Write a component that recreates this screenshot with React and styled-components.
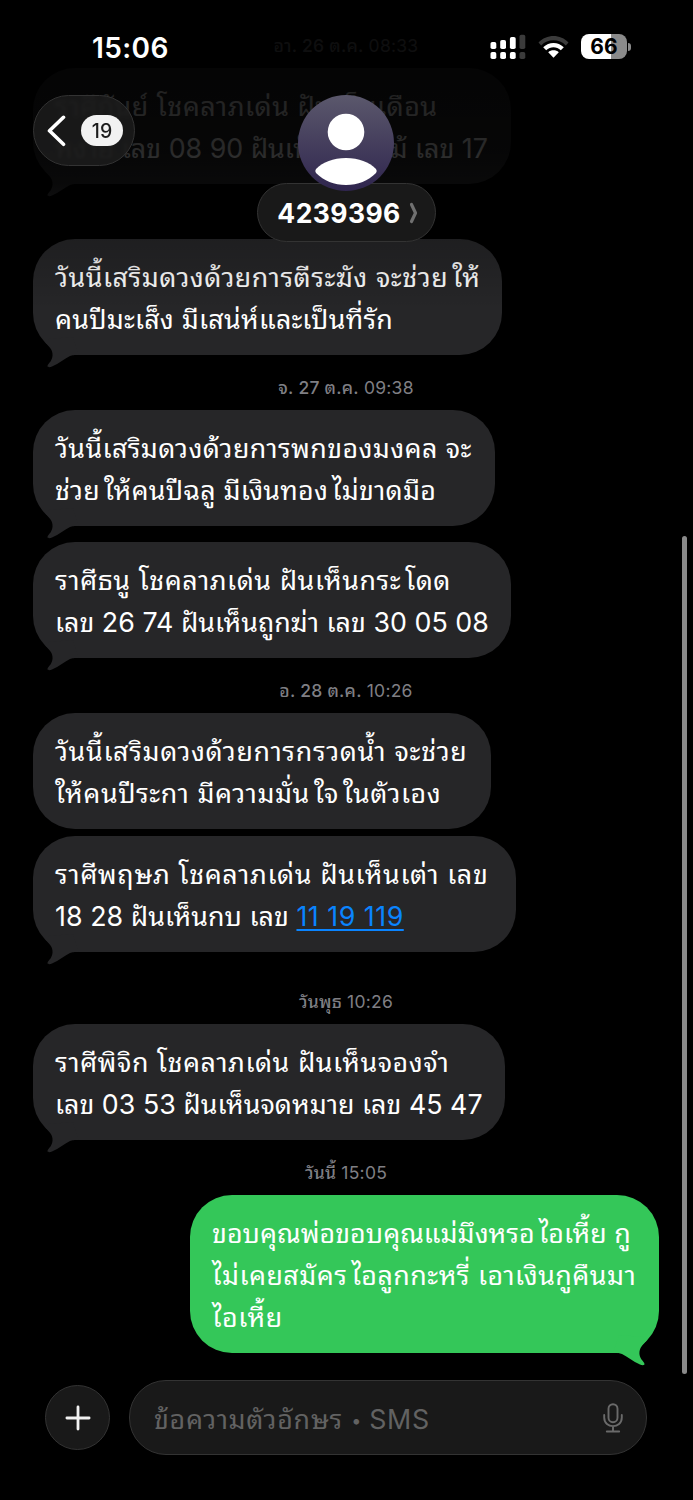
import styled, { createGlobalStyle, css } from "styled-components";

const messages = [
  { type: "date", day: "อา. 26 ต.ค.", time: "08:33", height: 68 },
  {
    type: "in",
    width: 478,
    tail: true,
    lines: ["ราศีกันย์ โชคลาภเด่น ฝันเห็นเดือน", "หงาย เลข 08 90 ฝันเห็นดอกไม้ เลข 17"],
    track: [0.52, 0],
    gap: 55,
  },
  {
    type: "in",
    width: 469,
    tail: true,
    lines: ["วันนี้เสริมดวงด้วยการตีระฆัง จะช่วยให้", "คนปีมะเส็ง มีเสน่ห์และเป็นที่รัก"],
    track: [0.56, 0.26],
  },
  { type: "date", day: "จ. 27 ต.ค.", time: "09:38", height: 55 },
  {
    type: "in",
    width: 462,
    tail: true,
    lines: ["วันนี้เสริมดวงด้วยการพกของมงคล จะ", "ช่วยให้คนปีฉลู มีเงินทองไม่ขาดมือ"],
    track: [0.4, 0.22],
    gap: 16,
  },
  {
    type: "in",
    width: 478,
    tail: true,
    lines: ["ราศีธนู โชคลาภเด่น ฝันเห็นกระโดด", "เลข 26 74 ฝันเห็นถูกฆ่า เลข 30 05 08"],
    track: [0.56, 0.02],
  },
  { type: "date", day: "อ. 28 ต.ค.", time: "10:26", height: 55 },
  {
    type: "in",
    width: 458,
    lines: ["วันนี้เสริมดวงด้วยการกรวดน้ำ จะช่วย", "ให้คนปีระกา มีความมั่นใจในตัวเอง"],
    track: [0.69, 0.58],
    gap: 7,
  },
  {
    type: "in",
    width: 483,
    tail: true,
    lines: ["ราศีพฤษภ โชคลาภเด่น ฝันเห็นเต่า เลข", "18 28 ฝันเห็นกบ เลข "],
    track: [0.63, 0.05],
    link: "11 19 119",
    gap: 17,
  },
  { type: "date", day: "วันพุธ", time: "10:26", height: 55 },
  {
    type: "in",
    width: 472,
    tail: true,
    lines: ["ราศีพิจิก โชคลาภเด่น ฝันเห็นจองจำ", "เลข 03 53 ฝันเห็นจดหมาย เลข 45 47"],
    track: [0.55, 0.02],
  },
  { type: "date", day: "วันนี้", time: "15:05", height: 55 },
  {
    type: "out",
    width: 469,
    tail: true,
    lines: ["ขอบคุณพ่อขอบคุณแม่มึงหรอไอเหี้ย กู", "ไม่เคยสมัครไอลูกกะหรี่ เอาเงินกูคืนมา", "ไอเหี้ย"],
    track: [0.04, 0.48, 0.6],
  },
];

// tall leading vowels get a little air when they follow another letter
const spaceVowels = (text) =>
  text.split(/(?<=[^\s])(?=[ใไโ])/).map((part, i) => (i === 0 ? part : <Lead key={i}>{part}</Lead>));

export default function App() {
  return (
    <Phone>
      <GlobalStyle />
      <Thread>
        {messages.map((m, i) =>
          m.type === "date" ? (
            <DateRow key={i} $height={m.height}>
              <b>{m.day}</b> {m.time}
            </DateRow>
          ) : (
            <Bubble key={i} $out={m.type === "out"} $width={m.width} $gap={m.gap}>
              {m.lines.map((line, n) => (
                <Line key={n} $track={m.track[n]}>
                  {spaceVowels(line)}
                  {m.link && n === m.lines.length - 1 && <NumberLink>{m.link}</NumberLink>}
                </Line>
              ))}
              {m.tail && <BubbleTail out={m.type === "out"} />}
            </Bubble>
          )
        )}
      </Thread>
      <TopFade />
      <Header>
        <StatusBar />
        <NavBar />
      </Header>
      <ScrollThumb />
      <Composer />
    </Phone>
  );
}

function BubbleTail({ out }) {
  return (
    <Tail $out={out} viewBox="0 -20 48 34">
      <path d="M16 -16 L12.500 -12.300 C14.500 -10.200 16 -8.500 17.500 -6.500 C20.500 -2.500 20 3 17.500 6.500 C16 8.500 14.600 9.500 14.500 11 C14.500 12.600 17 12.400 19 11.500 C26 8.500 32 3.500 37 1 C39.500 0 41 0 46 0 L40 -18 Z" />
    </Tail>
  );
}

function StatusBar() {
  return (
    <Status>
      <Clock>15:06</Clock>
      <Indicators>
        <svg width="36" height="25" viewBox="0 0 36 25" fill="#fff">
          <rect x="0.500" y="8" width="5.800" height="7" rx="1.800" />
          <rect x="10.200" y="6" width="5.800" height="9" rx="1.800" />
          <rect x="19.900" y="3" width="5.800" height="12" rx="1.800" />
          <rect x="29.500" y="0.800" width="5.800" height="14.200" rx="1.800" fill="#3b3b3b" />
          <rect x="0.500" y="18" width="5.800" height="7" rx="1.800" />
          <rect x="10.200" y="18" width="5.800" height="7" rx="1.800" />
          <rect x="19.900" y="18" width="5.800" height="7" rx="1.800" />
          <rect x="29.500" y="18" width="5.800" height="7" rx="1.800" fill="#3b3b3b" />
        </svg>
        <svg width="31" height="24" viewBox="0 0 31 24">
          <path d="M0.500 7.600 C8.500 -1.200 22.500 -1.200 30.500 7.600 L27.800 10.400 C21 3.600 10 3.600 3.200 10.400 Z" fill="#3b3b3b" />
          <path d="M5.200 12.300 C11 6.600 20 6.600 25.800 12.300 L22.800 15.200 C18.600 11.300 12.400 11.300 8.200 15.200 Z" fill="#fff" />
          <path d="M10.200 17.300 C13.200 14.700 17.800 14.700 20.800 17.300 L15.500 22.800 Z" fill="#fff" />
        </svg>
        <Battery>
          <BatteryBody>66</BatteryBody>
          <BatteryCap />
        </Battery>
      </Indicators>
    </Status>
  );
}

function NavBar() {
  return (
    <Nav>
      <BackButton>
        <svg width="20" height="32" viewBox="0 0 20 32" fill="none" stroke="#fff" strokeWidth="3.600" strokeLinecap="round" strokeLinejoin="round">
          <path d="M16.500 2.300 L2.500 15.800 L16.500 29.300" />
        </svg>
        <Unread>19</Unread>
      </BackButton>
      <Contact>
        <svg width="96" height="96" viewBox="0 0 96 96">
          <defs>
            <linearGradient id="avatar" x1="0" y1="0" x2="0" y2="1">
              <stop offset="0" stopColor="#5b586c" />
              <stop offset="1" stopColor="#2f254e" />
            </linearGradient>
          </defs>
          <circle cx="48" cy="48" r="48" fill="url(#avatar)" />
          <circle cx="48" cy="37" r="18.300" fill="#fff" />
          <path d="M18 74 C25 67 35 63 48 63 C61 63 71 67 78 74 Q79.500 76 78 78 C70 86 60 90 48 90 C36 90 26 86 18 78 Q16.500 76 18 74 Z" fill="#fff" />
        </svg>
        <NamePill>
          4239396
          <svg width="9" height="22" viewBox="0 0 9 22" fill="none" stroke="#707070" strokeWidth="3.200" strokeLinecap="round" strokeLinejoin="round">
            <path d="M2.500 2.500 L6.500 11 L2.500 19.500" />
          </svg>
        </NamePill>
      </Contact>
    </Nav>
  );
}

function Composer() {
  return (
    <ComposerBar>
      <AddButton>
        <svg width="26" height="26" viewBox="0 0 26 26" stroke="#f2f2f2" strokeWidth="2.800" strokeLinecap="round">
          <path d="M13 1.900 V24.100 M1.900 13 H24.100" />
        </svg>
      </AddButton>
      <Field>
        <Placeholder>
          ข้อความตัวอักษร <Dot>•</Dot> SMS
        </Placeholder>
        <svg width="20" height="30" viewBox="0 0 20 30" fill="none" stroke="#6a6a6a" strokeWidth="1.900" strokeLinecap="round">
          <rect x="5.500" y="1.200" width="9" height="18" rx="4.500" />
          <path d="M1.200 12 V14.500 C1.200 26 18.800 26 18.800 14.500 V12 M10 23.200 V28.500 M3.800 28.500 H16.200" />
        </svg>
      </Field>
    </ComposerBar>
  );
}

const GlobalStyle = createGlobalStyle`
  body {
    margin: 0;
    background: #000;
  }

  * {
    box-sizing: border-box;
  }
`;

const glass = css`
  background-color: #191919;
  border: 1.5px solid #333;
`;

const Phone = styled.div`
  position: relative;
  width: 693px;
  height: 1500px;
  overflow: hidden;
  display: flex;
  flex-direction: column;
  justify-content: space-between;
  background: #000;
  color: #fff;
  font-family: Inter, "Noto Sans Thai Looped", "Noto Sans Thai", Loma, sans-serif;
`;

const Thread = styled.main`
  display: flex;
  flex-direction: column;
  padding: 0 34px 0 33px;
`;

const DateRow = styled.div`
  height: ${(p) => p.$height}px;
  display: flex;
  align-items: flex-end;
  justify-content: center;
  gap: 5px;
  padding-bottom: 12px;
  font-size: 17.5px;
  line-height: 21px;
  letter-spacing: 0.25px;
  color: #7f7f84;

  b {
    font-weight: 500;
  }
`;

const Bubble = styled.div`
  position: relative;
  align-self: ${(p) => (p.$out ? "flex-end" : "flex-start")};
  width: ${(p) => p.$width}px;
  margin-bottom: ${(p) => p.$gap || 0}px;
  padding: 17px 0 15px 22px;
  border-radius: 42px;
  background: ${(p) => (p.$out ? "#34c759" : "#262628")};
`;

const Line = styled.div`
  height: 42px;
  line-height: 42px;
  font-size: 26.8px;
  letter-spacing: ${(p) => p.$track}px;
  white-space: nowrap;
`;

const Lead = styled.span`
  margin-left: 4px;
`;

const NumberLink = styled.span`
  color: #0a84ff;
  letter-spacing: 0.5px;
  text-decoration: underline;
  text-decoration-thickness: 2px;
  text-underline-offset: 3px;
`;

const Tail = styled.svg`
  position: absolute;
  bottom: -14px;
  width: 48px;
  height: 34px;
  fill: ${(p) => (p.$out ? "#34c759" : "#262628")};
  ${(p) => (p.$out ? "right: 0; transform: scaleX(-1);" : "left: 0;")}
`;

const TopFade = styled.div`
  position: absolute;
  inset: 0 0 auto;
  height: 310px;
  background: linear-gradient(
    rgba(0, 0, 0, 0.91) 0,
    rgba(0, 0, 0, 0.88) 70px,
    rgba(0, 0, 0, 0.84) 150px,
    rgba(0, 0, 0, 0.76) 184px,
    rgba(0, 0, 0, 0.2) 240px,
    rgba(0, 0, 0, 0) 310px
  );
`;

const Header = styled.header`
  position: absolute;
  inset: 0 0 auto;
`;

const Status = styled.div`
  height: 95px;
  display: flex;
  justify-content: space-between;
  padding: 34px 62px 0 92px;
`;

const Clock = styled.div`
  font-size: 28px;
  line-height: 28px;
  font-weight: 600;
  letter-spacing: 0.4px;
`;

const Indicators = styled.div`
  height: 25px;
  display: flex;
  align-items: center;
  gap: 12px;
`;

const Battery = styled.div`
  display: flex;
  align-items: center;
  gap: 1px;
`;

const BatteryBody = styled.div`
  width: 46px;
  height: 25px;
  border-radius: 8px;
  background: linear-gradient(90deg, #fff 66%, #8a8a8a 66%);
  color: #000;
  font-size: 21px;
  font-weight: 700;
  line-height: 26px;
  text-align: center;
`;

const BatteryCap = styled.div`
  width: 3px;
  height: 8px;
  border-radius: 0 3px 3px 0;
  background: #8a8a8a;
`;

const Nav = styled.nav`
  display: grid;
  grid-template-columns: 1fr auto 1fr;
  padding: 0 34px 0 33px;
  align-items: start;
`;

const BackButton = styled.div`
  ${glass}
  background-color: rgba(28, 28, 28, 0.85);
  backdrop-filter: blur(1.5px);
  width: 102px;
  height: 71px;
  display: flex;
  align-items: center;
  gap: 14px;
  padding-left: 13px;
  border-radius: 36px;
`;

const Unread = styled.div`
  width: 42px;
  height: 31px;
  border-radius: 16px;
  background: #f2f2f2;
  color: #1c1c1c;
  font-size: 19.5px;
  font-weight: 500;
  line-height: 32px;
  text-align: center;
`;

const Contact = styled.div`
  display: flex;
  flex-direction: column;
  align-items: center;

  > svg {
    position: relative;
    z-index: 1;
  }
`;

const NamePill = styled.div`
  ${glass}
  width: 179px;
  height: 59px;
  margin-top: -8px;
  display: flex;
  align-items: center;
  justify-content: center;
  gap: 8px;
  padding-left: 3px;
  border-radius: 30px;
  font-size: 26.5px;
  font-weight: 700;
  letter-spacing: 0.4px;
`;

const ScrollThumb = styled.div`
  position: absolute;
  top: 536px;
  right: 6px;
  width: 5px;
  height: 838px;
  border-radius: 3px;
  background: #8a8a8a;
`;

const ComposerBar = styled.footer`
  display: flex;
  align-items: center;
  gap: 19px;
  padding: 0 46px 45px 45px;
`;

const AddButton = styled.div`
  ${glass}
  width: 65px;
  height: 65px;
  display: grid;
  place-items: center;
  border-radius: 50%;
`;

const Field = styled.div`
  ${glass}
  flex: 1;
  height: 75px;
  display: flex;
  align-items: center;
  justify-content: space-between;
  padding: 0 23px 0 24px;
  border-radius: 37px;
  color: #626262;
  font-size: 26.8px;
  white-space: nowrap;
`;

const Placeholder = styled.span`
  padding-bottom: 3px;
  letter-spacing: 0.7px;
`;

const Dot = styled.span`
  margin-right: -1px;
  font-size: 18px;
  vertical-align: 1.5px;
`;
